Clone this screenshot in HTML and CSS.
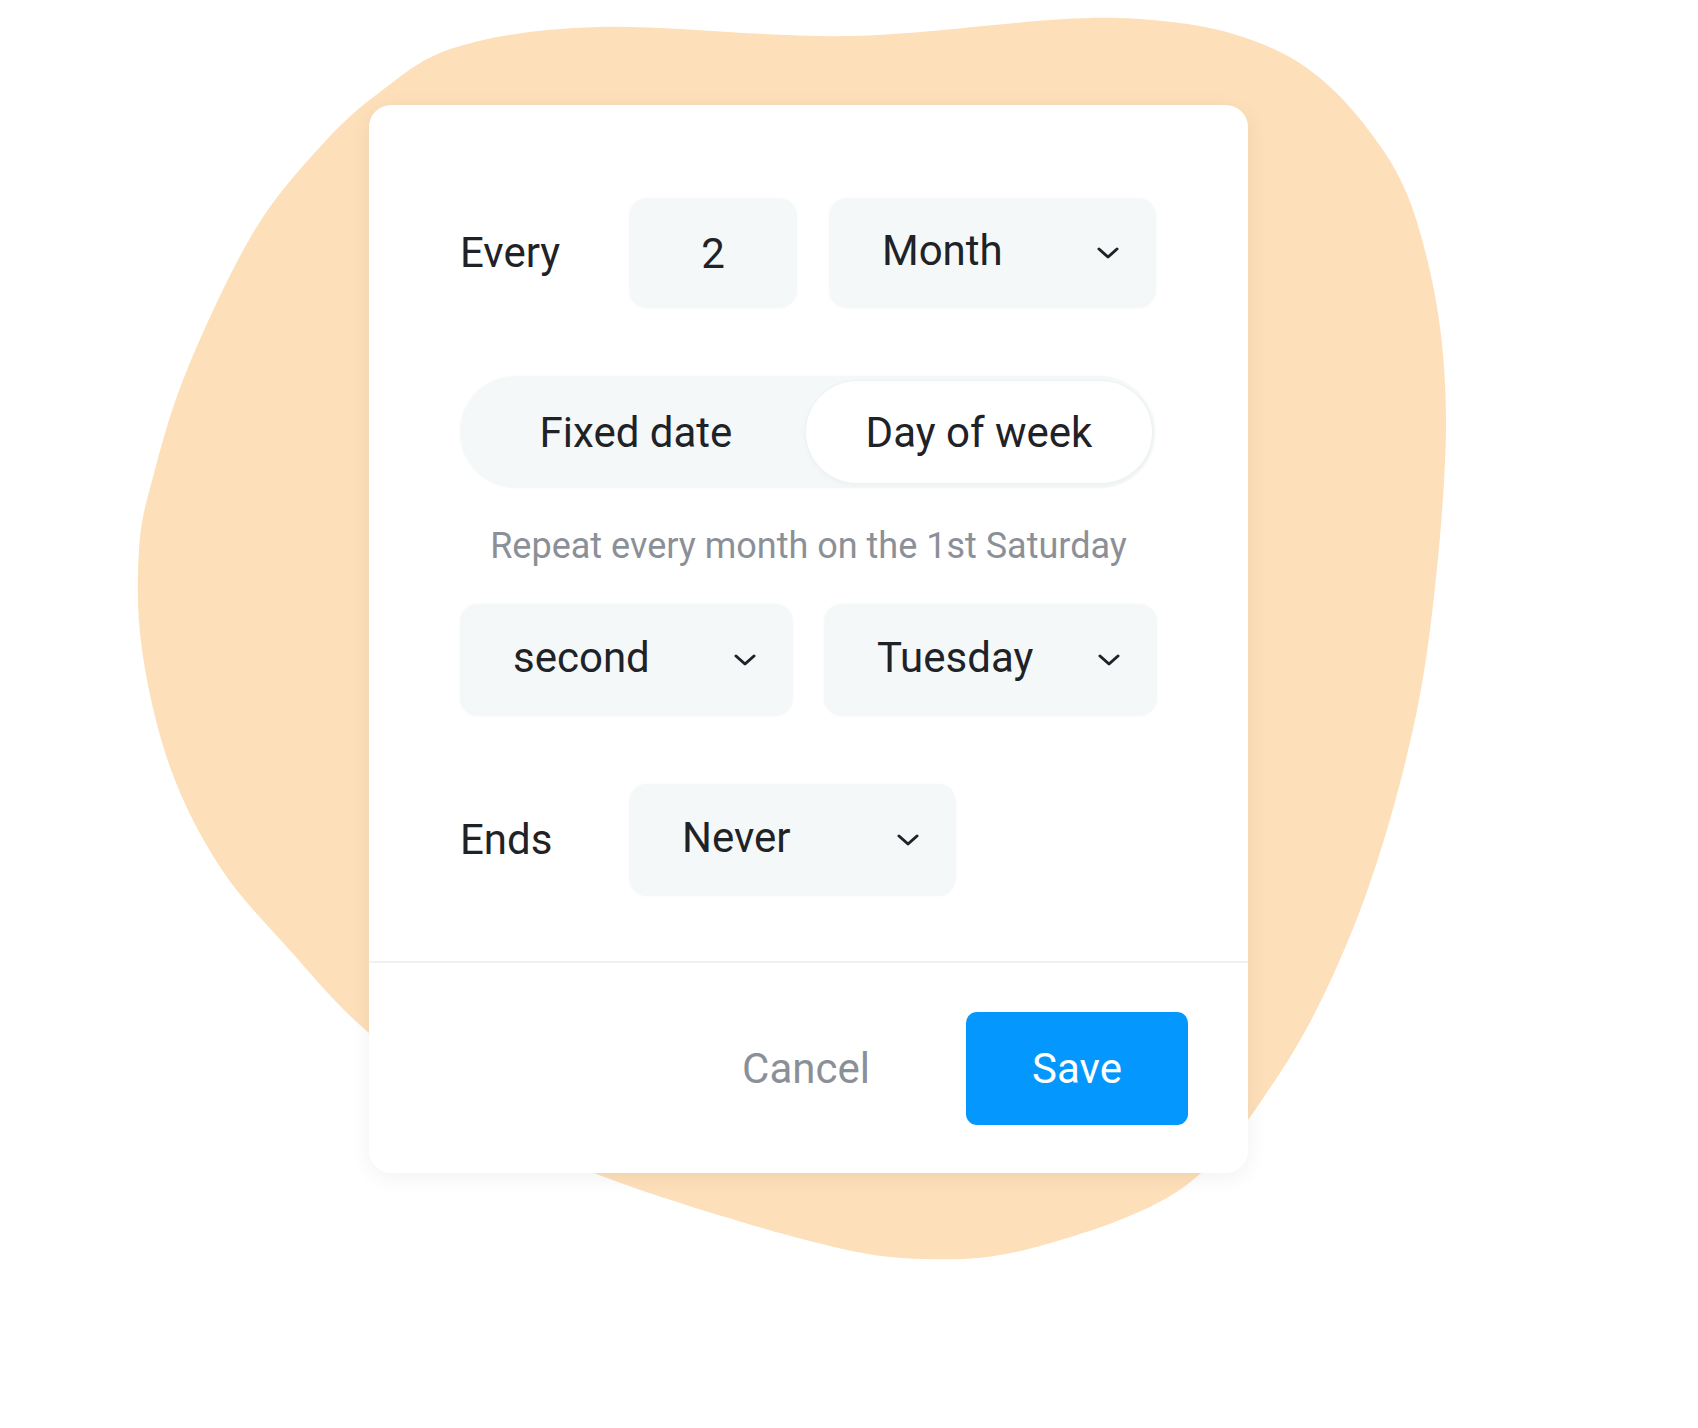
FILE: index.html
```html
<!DOCTYPE html>
<html lang="en">
<head>
<meta charset="utf-8">
<title>Repeat settings</title>
<link rel="stylesheet" href="styles.css">
</head>
<body>
<div class="stage">
  <svg class="blob" width="1698" height="1428" viewBox="0 0 1698 1428" aria-hidden="true">
    <path fill="#FDDFB9" d="M600,27 C665.5,25.2 763.5,37.5 850,36 C936.5,34.5 1047,15.2 1119,18 C1191,20.8 1238,31 1282,53 C1326,75 1358.5,114.3 1383,150 C1407.5,185.7 1418.5,222 1429,267 C1439.5,312 1445.8,359.5 1446,420 C1446.2,480.5 1437.7,569.5 1430,630 C1422.3,690.5 1413.3,732 1400,783 C1386.7,834 1370,887.7 1350,936 C1330,984.3 1307.7,1031.2 1280,1073 C1252.3,1114.8 1224.7,1158 1184,1187 C1143.3,1216 1079.5,1235 1036,1247 C992.5,1259 961.3,1260.2 923,1259 C884.7,1257.8 860.8,1254.3 806,1240 C751.2,1225.7 648.3,1194.7 594,1173 C539.7,1151.3 517.5,1133.3 480,1110 C442.5,1086.7 401.2,1060.2 369,1033 C336.8,1005.8 311.8,974.7 287,947 C262.2,919.3 239.5,897 220,867 C200.5,837 183,803.2 170,767 C157,730.8 147.2,686.2 142,650 C136.8,613.8 137.2,578.8 139,550 C140.8,521.2 145,507 153,477 C161,447 170.3,410.7 187,370 C203.7,329.3 230.8,270.2 253,233 C275.2,195.8 298.8,170.5 320,147 C341.2,123.5 357.2,108.7 380,92 C402.8,75.3 420.3,57.8 457,47 C493.7,36.2 534.5,28.8 600,27 Z"/>
  </svg>

  <div class="card">
    <div class="card-body">
      <div class="row">
        <span class="label">Every</span>
        <div class="field num">2</div>
        <div class="field select w327 gap-left">
          <span>Month</span>
          <svg class="chev" width="22" height="12" viewBox="0 0 22 12"><polyline points="2,2 11,10 20,2"/></svg>
        </div>
      </div>

      <div class="segmented">
        <div class="seg">Fixed date</div>
        <div class="seg active">Day of week</div>
      </div>

      <p class="hint">Repeat every month on the 1st Saturday</p>

      <div class="row pair">
        <div class="field select w333">
          <span>second</span>
          <svg class="chev" width="22" height="12" viewBox="0 0 22 12"><polyline points="2,2 11,10 20,2"/></svg>
        </div>
        <div class="field select w333">
          <span>Tuesday</span>
          <svg class="chev" width="22" height="12" viewBox="0 0 22 12"><polyline points="2,2 11,10 20,2"/></svg>
        </div>
      </div>

      <div class="row ends">
        <span class="label">Ends</span>
        <div class="field select w327">
          <span>Never</span>
          <svg class="chev" width="22" height="12" viewBox="0 0 22 12"><polyline points="2,2 11,10 20,2"/></svg>
        </div>
      </div>
    </div>

    <div class="card-footer">
      <button class="btn cancel" type="button">Cancel</button>
      <button class="btn save" type="button">Save</button>
    </div>
  </div>
</div>
</body>
</html>
```

FILE: styles.css
```css
* {
  box-sizing: border-box;
}

body {
  margin: 0;
  background: #ffffff;
  font-family: Roboto, "Liberation Sans", sans-serif;
  color: #1f2226;
}

.stage {
  position: relative;
  width: 1698px;
  height: 1428px;
  padding-top: 105px;
  overflow: hidden;
}

.blob {
  position: absolute;
  left: 0;
  top: 0;
}

.card {
  position: relative;
  width: 879px;
  height: 1068px;
  margin-left: 369px;
  background: #ffffff;
  border-radius: 22px;
  box-shadow: 0 4px 22px rgba(0, 0, 0, 0.06);
  display: flex;
  flex-direction: column;
}

.card-body {
  padding: 93px 91px 65px;
}

.row {
  display: flex;
  align-items: center;
  height: 110px;
}

.row.pair {
  height: 112px;
  justify-content: space-between;
}

.row.ends {
  height: 112px;
  margin-top: 68px;
}

.label {
  width: 169px;
  font-size: 42px;
  line-height: 1;
  color: #1f2226;
}

.field {
  height: 100%;
  display: flex;
  align-items: center;
  background: #f4f8f9;
  border-radius: 18px;
  font-size: 42px;
  color: #1f2226;
  box-shadow: 0 0 3px rgba(30, 60, 80, 0.03);
}

.num {
  width: 168px;
  justify-content: center;
}

.select {
  justify-content: space-between;
  padding: 0 37px 0 53px;
}

.select span {
  margin-bottom: 5px;
}

.w327 {
  width: 327px;
}

.w333 {
  width: 333px;
}

.gap-left {
  margin-left: 32px;
}

.chev {
  display: block;
  flex: none;
}

.chev polyline {
  fill: none;
  stroke: #1f2226;
  stroke-width: 3;
  stroke-linecap: round;
  stroke-linejoin: round;
}

.segmented {
  margin-top: 68px;
  width: 695px;
  height: 112px;
  padding: 5px 3px 5px 0;
  border-radius: 56px;
  background: #f4f8f9;
  display: grid;
  grid-template-columns: 1fr 1fr;
  box-shadow: 0 0 3px rgba(30, 60, 80, 0.03);
}

.seg {
  display: flex;
  align-items: center;
  justify-content: center;
  font-size: 42px;
  color: #1f2226;
  border-radius: 52px;
}

.seg:first-child {
  padding-left: 6px;
}

.seg.active {
  background: #ffffff;
  box-shadow: 0 0 0 1px #eef2f4, 0 2px 6px rgba(0, 0, 0, 0.04);
}

.hint {
  margin: 38px 0;
  height: 40px;
  font-size: 36px;
  line-height: 40px;
  text-align: center;
  color: #8b9098;
}

.card-footer {
  border-top: 2px solid #eff1f3;
  padding: 49px 60px 48px;
  display: flex;
  justify-content: flex-end;
  align-items: center;
  gap: 49px;
}

.btn {
  font-family: Roboto, "Liberation Sans", sans-serif;
  font-size: 42px;
  height: 113px;
  width: 222px;
  border: none;
  border-radius: 11px;
  padding: 0;
  cursor: pointer;
}

.cancel {
  background: transparent;
  color: #8b9098;
}

.save {
  background: #0497fd;
  color: #ffffff;
}
```
